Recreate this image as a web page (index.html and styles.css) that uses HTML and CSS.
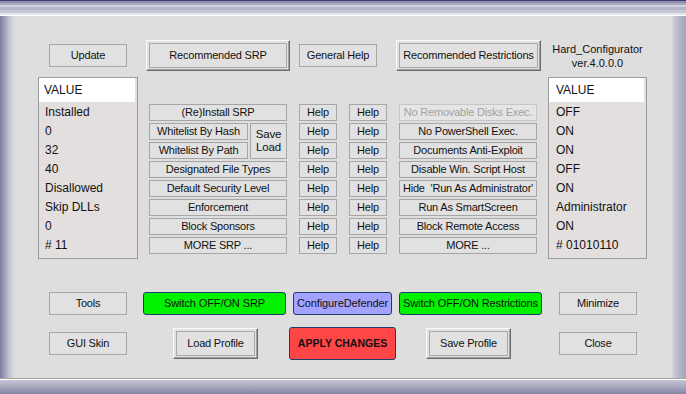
FILE: index.html
```html
<!DOCTYPE html>
<html lang="en">
<head>
  <meta charset="UTF-8">
  <title>Hard_Configurator</title>
  <link rel="stylesheet" href="styles.css">
</head>
<body>
  <div class="window">
    <div class="titlebar"></div>
    <div class="frame">
      <div class="edge edge-left"></div>
      <div class="client">

        <div class="toprow">
          <button class="btn btn-small">Update</button>
          <button class="btn btn-raised btn-rec-srp">Recommended SRP</button>
          <button class="btn btn-small btn-general">General Help</button>
          <button class="btn btn-raised btn-rec-restr">Recommended Restrictions</button>
          <div class="app-title">Hard_Configurator<br>ver.4.0.0.0</div>
        </div>

        <div class="middle">
          <div class="listbox">
            <div class="list-head">VALUE</div>
            <div class="list-item">Installed</div>
            <div class="list-item">0</div>
            <div class="list-item">32</div>
            <div class="list-item">40</div>
            <div class="list-item">Disallowed</div>
            <div class="list-item">Skip DLLs</div>
            <div class="list-item">0</div>
            <div class="list-item"># 11</div>
          </div>

          <div class="options">
            <button class="btn opt">(Re)Install SRP</button>
            <button class="btn opt">Help</button>
            <button class="btn opt">Help</button>
            <button class="btn opt disabled">No Removable Disks Exec.</button>

            <div class="whitelist">
              <button class="btn opt">Whitelist By Hash</button>
              <button class="btn opt save-load">Save<br>Load</button>
              <button class="btn opt">Whitelist By Path</button>
            </div>
            <button class="btn opt">Help</button>
            <button class="btn opt">Help</button>
            <button class="btn opt">No PowerShell Exec.</button>
            <button class="btn opt">Help</button>
            <button class="btn opt">Help</button>
            <button class="btn opt">Documents Anti-Exploit</button>

            <button class="btn opt">Designated File Types</button>
            <button class="btn opt">Help</button>
            <button class="btn opt">Help</button>
            <button class="btn opt">Disable Win. Script Host</button>

            <button class="btn opt">Default Security Level</button>
            <button class="btn opt">Help</button>
            <button class="btn opt">Help</button>
            <button class="btn opt">Hide &nbsp;'Run As Administrator'</button>

            <button class="btn opt">Enforcement</button>
            <button class="btn opt">Help</button>
            <button class="btn opt">Help</button>
            <button class="btn opt">Run As SmartScreen</button>

            <button class="btn opt">Block Sponsors</button>
            <button class="btn opt">Help</button>
            <button class="btn opt">Help</button>
            <button class="btn opt">Block Remote Access</button>

            <button class="btn opt">MORE SRP ...</button>
            <button class="btn opt">Help</button>
            <button class="btn opt">Help</button>
            <button class="btn opt">MORE ...</button>
          </div>

          <div class="listbox listbox-right">
            <div class="list-head">VALUE</div>
            <div class="list-item">OFF</div>
            <div class="list-item">ON</div>
            <div class="list-item">ON</div>
            <div class="list-item">OFF</div>
            <div class="list-item">ON</div>
            <div class="list-item">Administrator</div>
            <div class="list-item">ON</div>
            <div class="list-item"># 01010110</div>
          </div>
        </div>

        <div class="actions">
          <button class="btn btn-small">Tools</button>
          <button class="btn btn-color green btn-switch-srp">Switch OFF/ON SRP</button>
          <button class="btn btn-color violet btn-defender">ConfigureDefender</button>
          <button class="btn btn-color green btn-switch-restr">Switch OFF/ON Restrictions</button>
          <button class="btn btn-small btn-minimize">Minimize</button>
        </div>

        <div class="actions actions-last">
          <button class="btn btn-small">GUI Skin</button>
          <button class="btn btn-raised btn-profile btn-load">Load Profile</button>
          <button class="btn btn-color red btn-apply">APPLY CHANGES</button>
          <button class="btn btn-raised btn-profile btn-save">Save Profile</button>
          <button class="btn btn-small btn-close">Close</button>
        </div>

      </div>
      <div class="edge edge-right"></div>
    </div>
    <div class="bottombar"></div>
  </div>
</body>
</html>
```

FILE: styles.css
```css
body {
  margin: 0;
  font-family: "Liberation Sans", Arial, sans-serif;
  background: #dedede;
}

.window {
  width: 686px;
  height: 394px;
  display: flex;
  flex-direction: column;
  overflow: hidden;
}

/* window frame */

.titlebar {
  height: 16px;
  background: linear-gradient(to bottom,
    #3c3c6e 0 1px,
    #8e8eac 1px 3px,
    #aaaac2 3px 5px,
    #d2d2de 5px 7px,
    #b6b6ca 7px 10px,
    #c6c6d6 10px 13px,
    #e4e4ec 13px 15px,
    #ffffff 15px 16px);
}

.frame {
  flex: 1;
  display: flex;
}

.edge {
  width: 16px;
}

.edge-left {
  background: linear-gradient(to right, #7c7ca0, #9a9ab6 4px, #babacc 8px, #d2d2dc 12px, #dedee2);
}

.edge-right {
  width: 16px;
  background: linear-gradient(to right, #e4e4ea, #d0d0da 3px, #c2c2d0 6px, #b4b4c6 10px, #a4a4ba);
}

.bottombar {
  height: 16px;
  background: linear-gradient(to bottom,
    #a8a49c 0 1px,
    #ffffff 1px 2px,
    #c6c6d6 2px,
    #a6a6be 9px,
    #8484a4 16px);
}

.client {
  flex: 1;
  background: #dedede;
  display: flex;
  flex-direction: column;
}

/* buttons */

.btn {
  box-sizing: border-box;
  margin: 0;
  padding: 0;
  font-family: "Liberation Sans", Arial, sans-serif;
  font-size: 11px;
  letter-spacing: -0.2px;
  color: #111;
  background: #e1e1e1;
  border: 1px solid #a6a6a6;
  line-height: 1;
  cursor: pointer;
}

.btn-small {
  width: 78px;
  height: 23px;
}

.btn-raised {
  height: 31px;
  border-color: #fafafa #6c6c6c #6c6c6c #fafafa;
  box-shadow: inset -1px -1px 0 #a0a0a0;
  outline: 1px solid #a9a9a9;
  outline-offset: -4px;
}

.btn-rec-srp {
  width: 144px;
  margin-left: 19px;
}

.btn-general {
  margin-left: 9px;
}

.btn-rec-restr {
  width: 145px;
  margin-left: 19px;
}

.btn-color {
  height: 23px;
  border: 1px solid #1e3b6e;
  border-radius: 3px;
  letter-spacing: -0.1px;
}

.green {
  background: #00f200;
}

.violet {
  background: #a3a3ff;
}

.red {
  background: #ff4646;
}

/* top row */

.toprow {
  margin-top: 24px;
  height: 31px;
  padding-left: 33px;
  display: flex;
  align-items: center;
}

.app-title {
  width: 99px;
  margin-left: 7px;
  font-size: 11px;
  line-height: 14px;
  text-align: center;
  color: #111;
}

/* middle part */

.middle {
  margin-top: 6px;
  padding-left: 22px;
  display: flex;
  gap: 11px;
}

.listbox {
  box-sizing: border-box;
  width: 100px;
  height: 182px;
  border: 1px solid #9c9c9c;
  background: #e3dfdf;
  font-size: 12px;
  color: #111;
}

.listbox-right {
  width: 99px;
}

.list-head {
  height: 24px;
  line-height: 24px;
  margin-right: 2px;
  margin-bottom: 1px;
  padding-left: 5px;
  background: #fff;
}

.list-item {
  height: 19px;
  line-height: 19px;
  padding-left: 6px;
}

.listbox-right .list-head,
.listbox-right .list-item {
  padding-left: 7px;
}

.options {
  margin-top: 27px;
  display: grid;
  grid-template-columns: 138px 38px 38px 138px;
  grid-auto-rows: 17px;
  column-gap: 12px;
  row-gap: 2px;
  align-self: flex-start;
}

.opt {
  height: 17px;
}

.disabled {
  color: #a2a2a2;
  background: #e5e5e5;
  border-color: #c6c6c6;
}

.whitelist {
  grid-row: span 2;
  display: grid;
  grid-template-columns: 99px 37px;
  grid-template-rows: 17px 17px;
  gap: 2px;
}

.save-load {
  grid-row: span 2;
  height: 36px;
  line-height: 13px;
  font-size: 11.5px;
}

/* bottom rows */

.actions {
  margin-top: 33px;
  height: 23px;
  padding-left: 33px;
  display: flex;
  align-items: center;
}

.btn-switch-srp {
  width: 143px;
  margin-left: 16px;
}

.btn-defender {
  width: 99px;
  margin-left: 7px;
}

.btn-switch-restr {
  width: 143px;
  margin-left: 7px;
}

.btn-minimize {
  margin-left: 17px;
}

.actions-last {
  margin-top: 12px;
  height: 33px;
}

.btn-profile {
  width: 85px;
}

.btn-load {
  margin-left: 46px;
}

.btn-apply {
  width: 107px;
  height: 33px;
  margin-left: 31px;
  font-weight: bold;
  letter-spacing: 0;
  font-size: 10.5px;
}

.btn-save {
  margin-left: 30px;
}

.btn-close {
  margin-left: 48px;
}
```
